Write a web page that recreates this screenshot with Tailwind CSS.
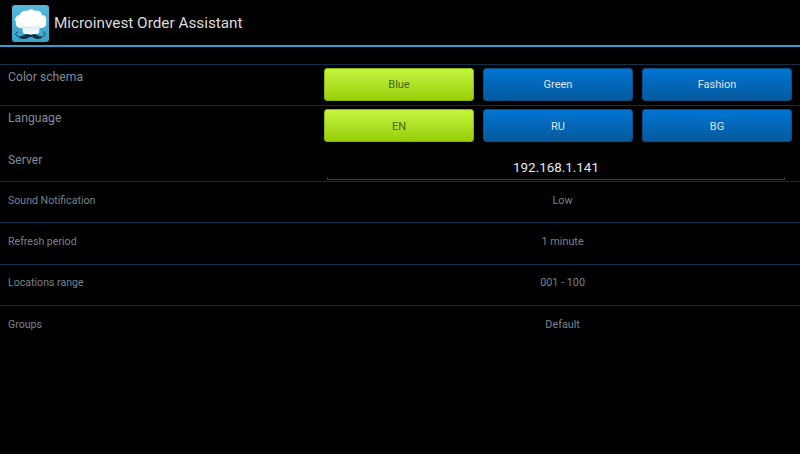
<!DOCTYPE html>
<html lang="en">
<head>
  <meta charset="UTF-8" />
  <title>Microinvest Order Assistant</title>
  <script src="https://cdn.jsdelivr.net/npm/@tailwindcss/browser@4"></script>
</head>
<body class="w-[800px] h-[454px] overflow-hidden bg-black font-['Roboto',sans-serif]">

  <!-- action bar -->
  <header class="h-[47px] flex items-center pl-[12px] pt-[1px] border-b-2 border-[#2a9fd0]">
    <svg class="w-[37px] h-[37px]" viewBox="0 0 37 37">
      <defs>
        <linearGradient id="tile" x1="0" y1="0" x2="0" y2="1">
          <stop offset="0" stop-color="#58b9da" />
          <stop offset="1" stop-color="#3aa3cb" />
        </linearGradient>
        <linearGradient id="hat" x1="0" y1="0" x2="0" y2="1">
          <stop offset="0" stop-color="#d5e9f1" />
          <stop offset="1" stop-color="#ffffff" />
        </linearGradient>
      </defs>
      <rect x="0" y="0" width="37" height="37" rx="3" fill="url(#tile)" />
      <path d="M10 23c-4 0-7-2-6-6 -2-3 0-7 4-7 0-3 4-5 7-4 2-2 6-2 8 0 3-1 7 1 7 4 4 0 5 4 4 7 1 4-2 6-6 6z" fill="#fff" />
      <path d="M10 20c5 2 13 2 18 0l-1 8c-4 2-12 2-16 0z" fill="url(#hat)" />
      <path d="M6 27c-3 0-3 4 0 4M31 27c3 0 3 4 0 4" fill="none" stroke="#0e4a63" stroke-width="1" />
      <path d="M6 31c3 2 6-2 9-2 1 0 3 1 4 1s2-1 3-1c3 0 6 4 9 2-1 3-6 4-9 2-1-1-2-1-3-1-1 0-2 0-3 1-4 2-9 1-10-2z" fill="#10303d" />
    </svg>
    <h1 class="ml-[5px] mt-[1px] text-[15.3px] text-[#dcdcdc]">Microinvest Order Assistant</h1>
  </header>

  <main class="mt-[17px] border-t border-[#0e2f4a]">
    <section class="h-[41px] border-b border-[#0e2f4a] flex">
      <span class="w-[324px] pl-2 pt-[3px] text-[12.2px] text-[#7f8c99]">Color schema</span>
      <div class="flex gap-[9px] pt-[3px]">
        <button class="w-[150px] h-[33px] pt-[2px] rounded-[3px] text-[11px] text-[#48650c] border border-[#86b80a] bg-gradient-to-b from-[#c4f53c] to-[#97cf00]">Blue</button>
        <button class="w-[150px] h-[33px] pt-[2px] rounded-[3px] text-[11px] text-[#d7e6f3] border border-[#0a4f88] bg-gradient-to-b from-[#0074d4] to-[#055a9c]">Green</button>
        <button class="w-[150px] h-[33px] pt-[2px] rounded-[3px] text-[11px] text-[#d7e6f3] border border-[#0a4f88] bg-gradient-to-b from-[#0074d4] to-[#055a9c]">Fashion</button>
      </div>
    </section>
    <section class="h-[41px] flex">
      <span class="w-[324px] pl-2 pt-[3px] text-[12.2px] text-[#7f8c99]">Language</span>
      <div class="flex gap-[9px] pt-[3px]">
        <button class="w-[150px] h-[33px] pt-[3px] rounded-[3px] text-[11px] text-[#48650c] border border-[#86b80a] bg-gradient-to-b from-[#c4f53c] to-[#97cf00]">EN</button>
        <button class="w-[150px] h-[33px] pt-[3px] rounded-[3px] text-[11px] text-[#d7e6f3] border border-[#0a4f88] bg-gradient-to-b from-[#0074d4] to-[#055a9c]">RU</button>
        <button class="w-[150px] h-[33px] pt-[3px] rounded-[3px] text-[11px] text-[#d7e6f3] border border-[#0a4f88] bg-gradient-to-b from-[#0074d4] to-[#055a9c]">BG</button>
      </div>
    </section>
    <section class="h-[35px] border-b border-[#0e2f4a] flex">
      <span class="w-[324px] pl-2 text-[12.2px] leading-[26px] text-[#7f8c99]">Server</span>
      <div class="w-[458px] ml-[3px] h-[33px] flex flex-col justify-end">
        <div class="text-center text-[13.4px] leading-[16px] mb-[1px] text-[#e8e8e8]">192.168.1.141</div>
        <div class="h-[3px] border-b border-x border-[#3a3a3a]"></div>
      </div>
    </section>
    <section class="h-[41.3px] pb-[3px] border-b border-[#0e2f4a] flex items-center">
      <span class="w-[324px] pl-2 text-[10.6px] text-[#76838f]">Sound Notification</span>
      <span class="w-[478px] pl-[2px] text-center text-[10.8px] text-[#76838f]">Low</span>
    </section>
    <section class="h-[41.3px] pb-[3px] border-b border-[#0e2f4a] flex items-center">
      <span class="w-[324px] pl-2 text-[10.6px] text-[#76838f]">Refresh period</span>
      <span class="w-[478px] pl-[2px] text-center text-[10.8px] text-[#76838f]">1 minute</span>
    </section>
    <section class="h-[41.3px] pb-[3px] border-b border-[#0e2f4a] flex items-center">
      <span class="w-[324px] pl-2 text-[10.6px] text-[#76838f]">Locations range</span>
      <span class="w-[478px] pl-[2px] text-center text-[10.8px] text-[#76838f]">001 - 100</span>
    </section>
    <section class="h-[41.3px] pb-[3px] flex items-center">
      <span class="w-[324px] pl-2 text-[10.6px] text-[#76838f]">Groups</span>
      <span class="w-[478px] pl-[2px] text-center text-[10.8px] text-[#76838f]">Default</span>
    </section>
  </main>
</body>
</html>
